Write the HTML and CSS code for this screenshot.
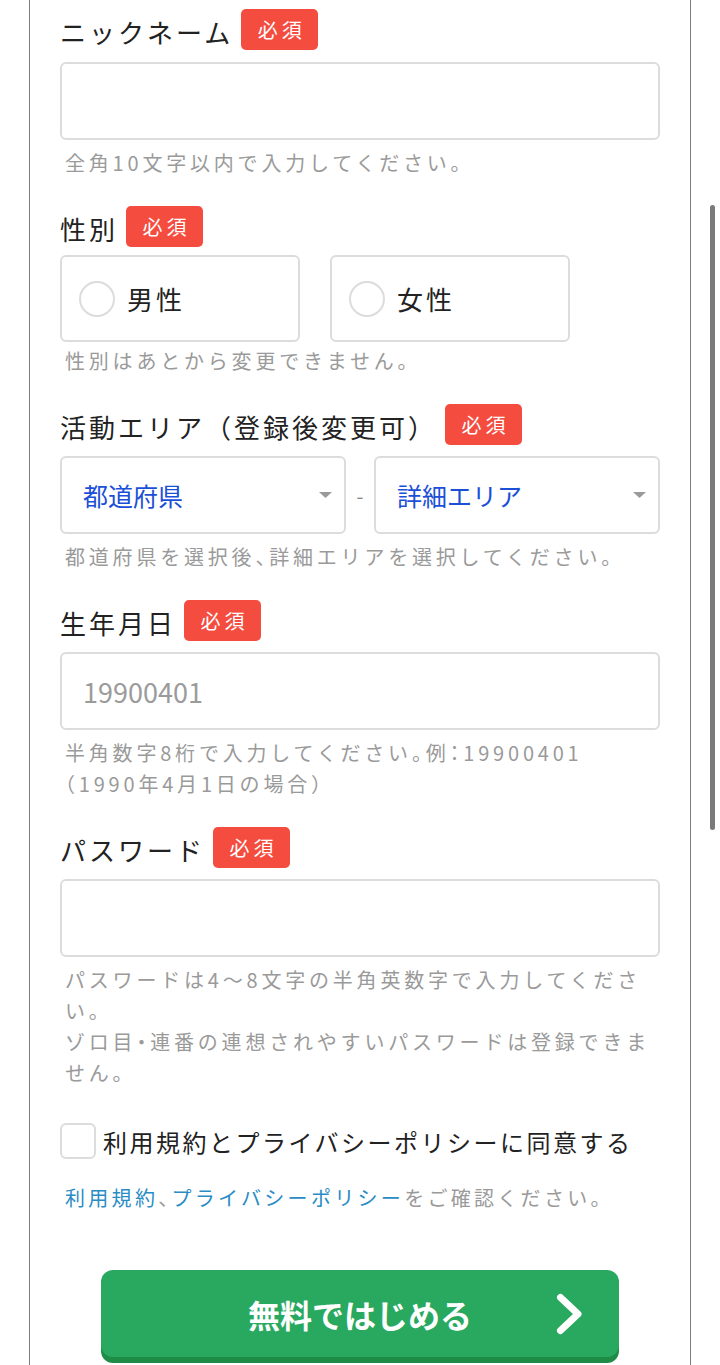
FILE: index.html
```html
<!DOCTYPE html>
<html lang="ja">
<head>
<meta charset="utf-8">
<title>登録フォーム</title>
<link rel="stylesheet" href="styles.css">
</head>
<body>
<div class="page">
  <form class="form">
    <div class="field field--first">
      <div class="field-label"><span class="label-text">ニックネーム</span><span class="badge">必須</span></div>
      <input class="text-input" type="text">
      <p class="hint">全角10文字以内で入力してください。</p>
    </div>

    <div class="field">
      <div class="field-label"><span class="label-text">性別</span><span class="badge">必須</span></div>
      <div class="choices">
        <label class="choice"><span class="radio"></span><span class="choice-text">男性</span></label>
        <label class="choice"><span class="radio"></span><span class="choice-text">女性</span></label>
      </div>
      <p class="hint hint--tight">性別はあとから変更できません。</p>
    </div>

    <div class="field">
      <div class="field-label"><span class="label-text">活動エリア（登録後変更可）</span><span class="badge">必須</span></div>
      <div class="selects">
        <div class="select"><span>都道府県</span><svg class="arrow" width="13" height="6" viewBox="0 0 13 6"><path d="M0 0H13L6.5 6Z" fill="#9a9a9a"/></svg></div>
        <span class="sep">-</span>
        <div class="select"><span>詳細エリア</span><svg class="arrow" width="13" height="6" viewBox="0 0 13 6"><path d="M0 0H13L6.5 6Z" fill="#9a9a9a"/></svg></div>
      </div>
      <p class="hint">都道府県を選択後、詳細エリアを選択してください。</p>
    </div>

    <div class="field">
      <div class="field-label"><span class="label-text">生年月日</span><span class="badge">必須</span></div>
      <input class="text-input" type="text" placeholder="19900401">
      <p class="hint">半角数字8桁で入力してください。例：19900401<br>（1990年4月1日の場合）</p>
    </div>

    <div class="field">
      <div class="field-label"><span class="label-text">パスワード</span><span class="badge">必須</span></div>
      <input class="text-input" type="password">
      <p class="hint">パスワードは4〜8文字の半角英数字で入力してください。<br>ゾロ目・連番の連想されやすいパスワードは登録できません。</p>
    </div>

    <label class="agree"><span class="checkbox"></span><span class="agree-text">利用規約とプライバシーポリシーに同意する</span></label>
    <p class="links"><a href="#">利用規約</a>、<a href="#">プライバシーポリシー</a>をご確認ください。</p>

    <button class="submit" type="button">無料ではじめる<svg class="chev" width="27" height="42" viewBox="0 0 27 42"><path d="M4.5 4.5L22 21L4.5 37.5" fill="none" stroke="#fff" stroke-width="7" stroke-linecap="round" stroke-linejoin="round"/></svg></button>
  </form>
  <div class="scrollbar"></div>
</div>
</body>
</html>
```

FILE: styles.css
```css
* { box-sizing: border-box; }

html, body {
  margin: 0;
  height: 100%;
  overflow: hidden;
  background: #fff;
}

body {
  font-family: "Noto Sans CJK JP", "Noto Sans", sans-serif;
  color: #222;
}

.page {
  margin: 0 29px;
  min-height: 1365px;
  border-left: 1px solid #7d7d7d;
  border-right: 1px solid #7d7d7d;
  padding: 9px 30px 0;
}

.form { margin: 0; }

.field + .field { margin-top: 28px; }

.field-label {
  display: flex;
  align-items: center;
  height: 41px;
}

.label-text {
  font-size: 26px;
  line-height: 1;
  letter-spacing: 3px;
  padding-top: 4px;
}

.badge {
  margin-left: 8px;
  width: 77px;
  height: 41px;
  border-radius: 5px;
  background: #f44c3f;
  color: #fff;
  font-size: 20px;
  letter-spacing: 4px;
  padding-left: 4px;
  display: flex;
  align-items: center;
  justify-content: center;
}

.text-input {
  display: block;
  width: 100%;
  height: 78px;
  margin: 11px 0 0;
  border: 2px solid #dcdcdc;
  border-radius: 6px;
  padding: 0 21px;
  font-family: inherit;
  font-size: 27px;
  color: #222;
  background: #fff;
  outline: none;
}

.field--first .text-input { margin-top: 12px; }

.text-input::placeholder { color: #9b9b9b; }

.hint {
  margin: 7px 0 0;
  padding-left: 5px;
  font-size: 20px;
  line-height: 31px;
  letter-spacing: 3.8px;
  color: #9a9a9a;
  font-feature-settings: "halt";
}

.hint--tight { margin-top: 3px; }

.choices {
  display: flex;
  gap: 30px;
  margin-top: 8px;
}

.choice {
  width: 240px;
  height: 87px;
  border: 2px solid #dcdcdc;
  border-radius: 6px;
  display: flex;
  align-items: center;
  gap: 12px;
  padding-left: 17px;
}

.radio {
  width: 36px;
  height: 36px;
  border-radius: 50%;
  border: 2px solid #dcdcdc;
}

.choice-text {
  font-size: 26px;
  letter-spacing: 3px;
}

.selects {
  display: flex;
  align-items: center;
  margin-top: 11px;
}

.select {
  flex: 0 0 286px;
  height: 78px;
  border: 2px solid #dcdcdc;
  border-radius: 6px;
  display: flex;
  align-items: center;
  justify-content: space-between;
  padding: 0 12px 0 21px;
  font-size: 25px;
  color: #1b4fd8;
}

.sep {
  flex: 1;
  text-align: center;
  color: #888;
  font-size: 20px;
}

.agree {
  display: flex;
  align-items: center;
  gap: 7px;
  margin-top: 35px;
}

.checkbox {
  width: 36px;
  height: 36px;
  border: 2px solid #dcdcdc;
  border-radius: 6px;
}

.agree-text {
  font-size: 24px;
  letter-spacing: 2.5px;
}

.links {
  margin: 23px 0 0;
  padding-left: 5px;
  font-size: 20px;
  line-height: 31px;
  letter-spacing: 3.3px;
  color: #9a9a9a;
  font-feature-settings: "halt";
}

.links a {
  color: #2a8cc4;
  text-decoration: none;
}

.submit {
  position: relative;
  display: flex;
  align-items: center;
  justify-content: center;
  width: 518px;
  height: 87px;
  margin: 57px auto 0;
  border: none;
  border-radius: 12px;
  background: #29a95f;
  box-shadow: 0 6px 0 #1e8b47;
  color: #fff;
  font-family: inherit;
  font-size: 32px;
  font-weight: bold;
}

.chev {
  position: absolute;
  right: 36px;
  top: 50%;
  transform: translateY(-50%);
}

.scrollbar {
  position: fixed;
  left: 710px;
  top: 205px;
  width: 5px;
  height: 625px;
  border-radius: 3px;
  background: #7a7a7a;
}
```
